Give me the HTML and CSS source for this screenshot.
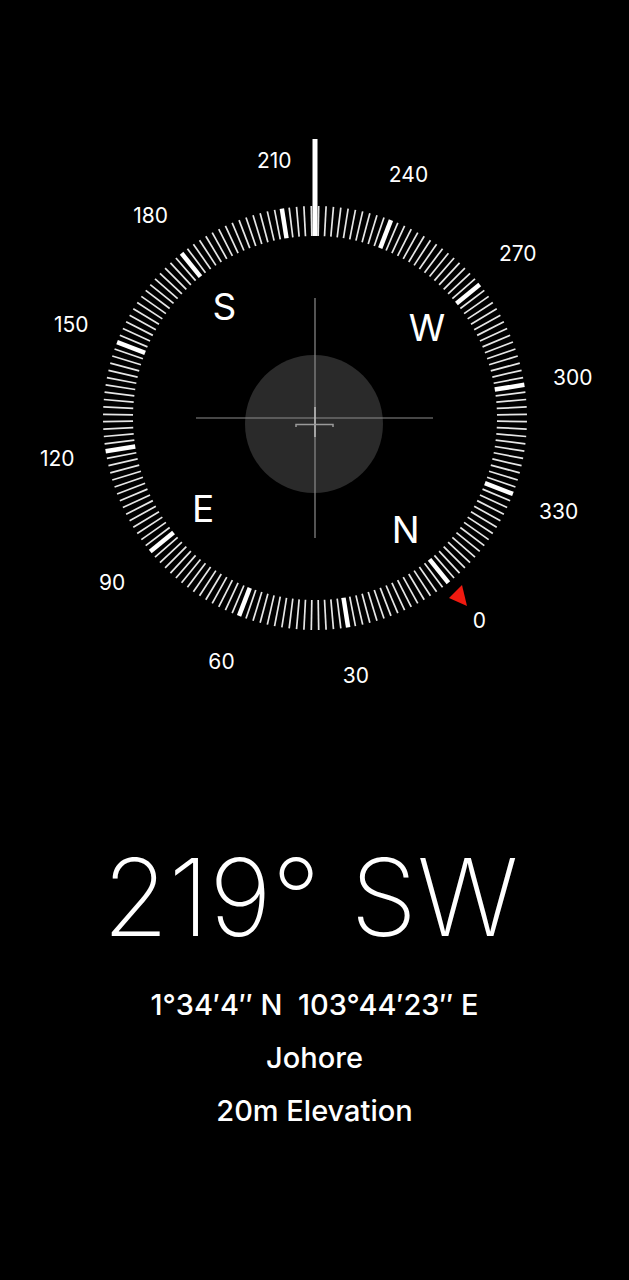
FILE: index.html
```html
<!DOCTYPE html>
<html>
<head>
    <title>Compass</title>
    <link rel="stylesheet" href="styles.css">
</head>
<body>
    <div class="compass">
        <svg id="dial" class="dial" width="629" height="780" viewBox="0 0 629 780">
            <g id="ticks"></g>
            <g id="labels" class="labels"></g>
            <g id="cardinals" class="cardinals"></g>
            <circle cx="314" cy="424" r="69" fill="#2a2a2a"/>
            <line x1="196" y1="418" x2="433" y2="418" class="cross"/>
            <line x1="315" y1="298" x2="315" y2="538" class="cross"/>
            <line x1="315" y1="407" x2="315" y2="437" class="cross-bright"/>
            <path d="M296 427 V424.5 H333 V427" class="level"/>
            <rect x="312.5" y="139" width="5" height="97" fill="#fff"/>
            <polygon points="449,598 462,585 467,606" fill="#f01a10"/>
        </svg>
    </div>

    <div class="readout">
        <div class="heading">219° SW</div>
        <div class="coords">1°34′4″ N&nbsp;&nbsp;103°44′23″ E</div>
        <div class="place">Johore</div>
        <div class="place">20m Elevation</div>
    </div>

    <script>
        const cx = 315;
        const cy = 418;
        const heading = 219;
        const ns = 'http://www.w3.org/2000/svg';

        const ticks = document.getElementById('ticks');
        const labels = document.getElementById('labels');
        const cardinals = document.getElementById('cardinals');

        function point(deg, r) {
            const a = (deg - heading) * Math.PI / 180;
            return [cx + r * Math.sin(a), cy - r * Math.cos(a)];
        }

        for (let d = 0; d < 360; d += 2) {
            const major = d % 30 === 0;
            const [x1, y1] = point(d, 182);
            const [x2, y2] = point(d, 212);
            const line = document.createElementNS(ns, 'line');
            line.setAttribute('x1', x1.toFixed(2));
            line.setAttribute('y1', y1.toFixed(2));
            line.setAttribute('x2', x2.toFixed(2));
            line.setAttribute('y2', y2.toFixed(2));
            line.setAttribute('class', major ? 'tick major' : 'tick');
            ticks.appendChild(line);

            if (major) {
                const [lx, ly] = point(d, 261);
                const text = document.createElementNS(ns, 'text');
                text.setAttribute('x', lx.toFixed(1));
                text.setAttribute('y', ly.toFixed(1));
                text.textContent = d;
                labels.appendChild(text);
            }
        }

        [['N', 0], ['E', 90], ['S', 180], ['W', 270]].forEach(([name, d]) => {
            const [lx, ly] = point(d, 144);
            const text = document.createElementNS(ns, 'text');
            text.setAttribute('x', lx.toFixed(1));
            text.setAttribute('y', ly.toFixed(1));
            text.textContent = name;
            cardinals.appendChild(text);
        });
    </script>
</body>
</html>
```

FILE: styles.css
```css
body {
    margin: 0;
    background-color: #000;
    color: #fff;
    font-family: Inter, "Liberation Sans", sans-serif;
}
.compass {
    width: 629px;
    height: 780px;
}
.dial {
    display: block;
}
.tick {
    stroke: #e6e6e6;
    stroke-width: 1.7;
}
.tick.major {
    stroke: #fff;
    stroke-width: 4.5;
}
.labels text {
    fill: #fff;
    font-size: 21px;
    text-anchor: middle;
    dominant-baseline: central;
}
.cardinals text {
    fill: #fff;
    font-size: 37px;
    text-anchor: middle;
    dominant-baseline: central;
}
.cross {
    stroke: #8c8c8c;
    stroke-width: 1.2;
}
.cross-bright {
    stroke: #d0d0d0;
    stroke-width: 1.2;
}
.level {
    fill: none;
    stroke: #9a9a9a;
    stroke-width: 1.5;
}
.readout {
    display: flex;
    flex-direction: column;
    align-items: center;
}
.heading {
    font-size: 107px;
    font-weight: 200;
    line-height: 1;
    margin-top: 64px;
    padding-right: 8px;
}
.coords {
    font-size: 29px;
    font-weight: 500;
    line-height: 53px;
    margin-top: 27px;
}
.place {
    font-size: 29px;
    font-weight: 500;
    line-height: 53px;
}
```
